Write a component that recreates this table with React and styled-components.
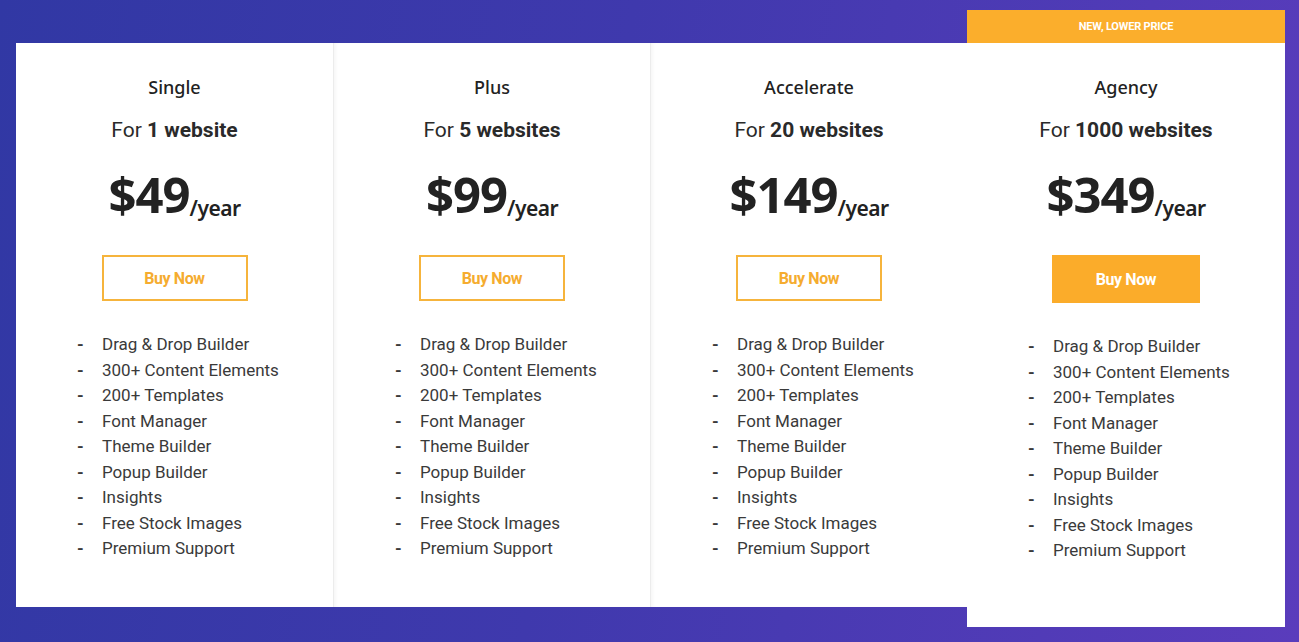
import React from 'react';
import styled, { createGlobalStyle } from 'styled-components';

const features = [
  'Drag & Drop Builder',
  '300+ Content Elements',
  '200+ Templates',
  'Font Manager',
  'Theme Builder',
  'Popup Builder',
  'Insights',
  'Free Stock Images',
  'Premium Support',
];

const plans = [
  { name: 'Single', sites: '1 website', price: '49' },
  { name: 'Plus', sites: '5 websites', price: '99' },
  { name: 'Accelerate', sites: '20 websites', price: '149' },
  { name: 'Agency', sites: '1000 websites', price: '349', featured: true },
];

const App = () => {
  return (
    <>
      <GlobalStyle />
      <Page>
        <Row>
          {plans.map((p, i) => (
            <Card key={p.name} $featured={p.featured} $first={i === 0}>
              {p.featured && <Banner>NEW, LOWER PRICE</Banner>}
              <CardBody $featured={p.featured}>
                <PlanName>{p.name}</PlanName>
                <Sites>
                  For <b>{p.sites}</b>
                </Sites>
                <Price>
                  ${p.price}
                  <Per>/year</Per>
                </Price>
                <BuyButton $filled={p.featured}>Buy Now</BuyButton>
                <Features>
                  {features.map((f) => (
                    <li key={f}>{f}</li>
                  ))}
                </Features>
              </CardBody>
            </Card>
          ))}
        </Row>
      </Page>
    </>
  );
};

const GlobalStyle = createGlobalStyle`
  html, body {
    margin: 0;
    padding: 0;
  }
  body {
    font-family: Roboto, 'Liberation Sans', sans-serif;
  }
`;

const Page = styled.div`
  width: 1299px;
  height: 642px;
  overflow: hidden;
  background: linear-gradient(100deg, #3138a4 0%, #3f39ad 45%, #5a3cbc 100%);
  box-sizing: border-box;
  padding: 10px 0 0 16px;
`;

const Row = styled.div`
  display: flex;
  align-items: flex-start;
`;

const Card = styled.div`
  box-sizing: border-box;
  flex: none;
  width: ${(p) => (p.$featured ? '318px' : '317px')};
  margin-top: ${(p) => (p.$featured ? '0' : '33px')};
  background: #ffffff;
  display: flex;
  flex-direction: column;
  position: relative;
  border-left: ${(p) => (p.$first || p.$featured ? 'none' : '1px solid #ececec')};
  box-shadow: ${(p) => (p.$first || p.$featured ? 'none' : 'inset 3px 0 4px -2px rgba(0, 0, 0, 0.05)')};
  z-index: ${(p) => (p.$featured ? 2 : 1)};
`;

const Banner = styled.div`
  height: 33px;
  background: #fbae2c;
  color: #ffffff;
  font-family: Roboto, sans-serif;
  font-weight: 700;
  font-size: 11px;
  letter-spacing: -0.2px;
  display: flex;
  align-items: center;
  justify-content: center;
`;

const CardBody = styled.div`
  height: ${(p) => (p.$featured ? '584px' : '564px')};
  box-sizing: border-box;
  padding-top: 33px;
  display: flex;
  flex-direction: column;
  align-items: center;
`;

const PlanName = styled.div`
  font-family: 'Noto Sans', sans-serif;
  font-weight: 500;
  font-size: 18px;
  color: #222222;
  line-height: 22px;
`;

const Sites = styled.div`
  margin-top: 20px;
  font-family: Roboto, sans-serif;
  font-size: 21px;
  color: #2a2a2a;
  line-height: 24px;

  b {
    font-weight: 700;
  }
`;

const Price = styled.div`
  margin-top: 24px;
  font-family: 'Noto Sans', sans-serif;
  font-weight: 700;
  font-size: 49px;
  letter-spacing: -1px;
  color: #222222;
  line-height: 56px;
  display: flex;
  align-items: baseline;
`;

const Per = styled.span`
  font-size: 21px;
  font-weight: 600;
  letter-spacing: -0.5px;
  position: relative;
  top: 3px;
`;

const BuyButton = styled.button`
  margin-top: 22px;
  width: ${(p) => (p.$filled ? '148px' : '146px')};
  height: ${(p) => (p.$filled ? '48px' : '46px')};
  box-sizing: border-box;
  border: ${(p) => (p.$filled ? 'none' : '2px solid #f6b43c')};
  background: ${(p) => (p.$filled ? '#fbac2a' : '#ffffff')};
  color: ${(p) => (p.$filled ? '#ffffff' : '#f5ac2f')};
  font-family: Roboto, sans-serif;
  font-weight: 700;
  font-size: 16px;
  letter-spacing: -0.4px;
  cursor: pointer;
`;

const Features = styled.ul`
  list-style: none;
  margin: 31px 0 0 0;
  padding: 0 0 0 61px;
  align-self: stretch;

  li {
    position: relative;
    padding-left: 25px;
    font-family: Roboto, sans-serif;
    font-size: 17px;
    line-height: 25.5px;
    color: #3a3a3a;
  }

  li::before {
    content: '-';
    position: absolute;
    left: 0;
    top: 0;
    font-weight: 700;
  }
`;

export default App;
